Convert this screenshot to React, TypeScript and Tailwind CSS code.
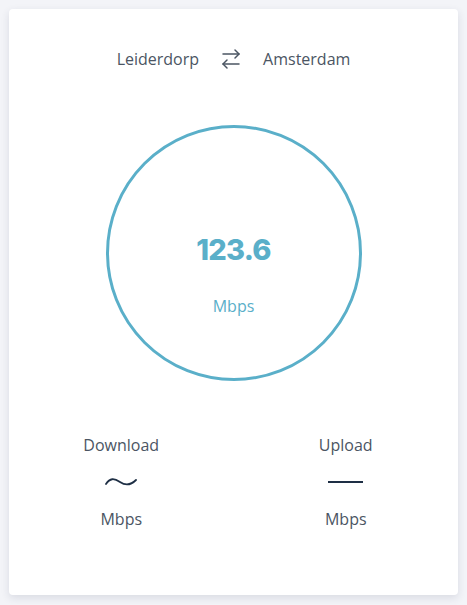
import { ArrowRightLeft } from "lucide-react";

function Stat({ label, icon }: { label: string; icon: React.ReactNode }) {
    return (
        <div className="flex flex-col items-center">
            <span className="text-base leading-[22px] text-[#4b5563]">{label}</span>
            <div className="h-[34px] mt-[9px] flex items-center justify-center">{icon}</div>
            <span className="text-base leading-[22px] text-[#4b5563] mt-[9px]">Mbps</span>
        </div>
    );
}

export default function App() {
    return (
        <div className="min-h-screen bg-[#f3f4f8] p-[9px] pb-[10px]" style={{ fontFamily: '"Open Sans", sans-serif' }}>
            <div className="bg-white rounded shadow-[0_3px_8px_rgba(30,40,70,0.12)] pt-[38px] pb-[65px]">
                <div className="flex items-center justify-center gap-5 text-base leading-[22px] text-[#4b5563]">
                    <span>Leiderdorp</span>
                    <ArrowRightLeft className="w-[24px] h-[24px] text-[#4b5563]" strokeWidth={1.5} />
                    <span>Amsterdam</span>
                </div>

                <div className="flex justify-center mt-[54px]">
                    <div className="w-[256px] h-[256px] rounded-full border-[3px] border-[#5aafc9] flex flex-col items-center pt-[107px]">
                        <span
                            className="text-[29px] font-extrabold text-[#5aafc9] leading-none tracking-tight"
                            style={{ fontFamily: 'Inter, sans-serif' }}
                        >
                            123.6
                        </span>
                        <span className="text-base leading-[22px] text-[#5aafc9] mt-[31px]">Mbps</span>
                    </div>
                </div>

                <div className="grid grid-cols-2 mt-[53px]">
                    <Stat
                        label="Download"
                        icon={
                            <svg width="32" height="10" viewBox="0 0 32 10" fill="none">
                                <path d="M1 7 C5 1, 9 1, 15 5 C21 9, 26 8, 31 3" stroke="#1e2f45" strokeWidth="1.8" strokeLinecap="round" />
                            </svg>
                        }
                    />
                    <Stat label="Upload" icon={<div className="w-[35px] h-[2px] bg-[#1e2f45]" />} />
                </div>
            </div>
        </div>
    );
}
